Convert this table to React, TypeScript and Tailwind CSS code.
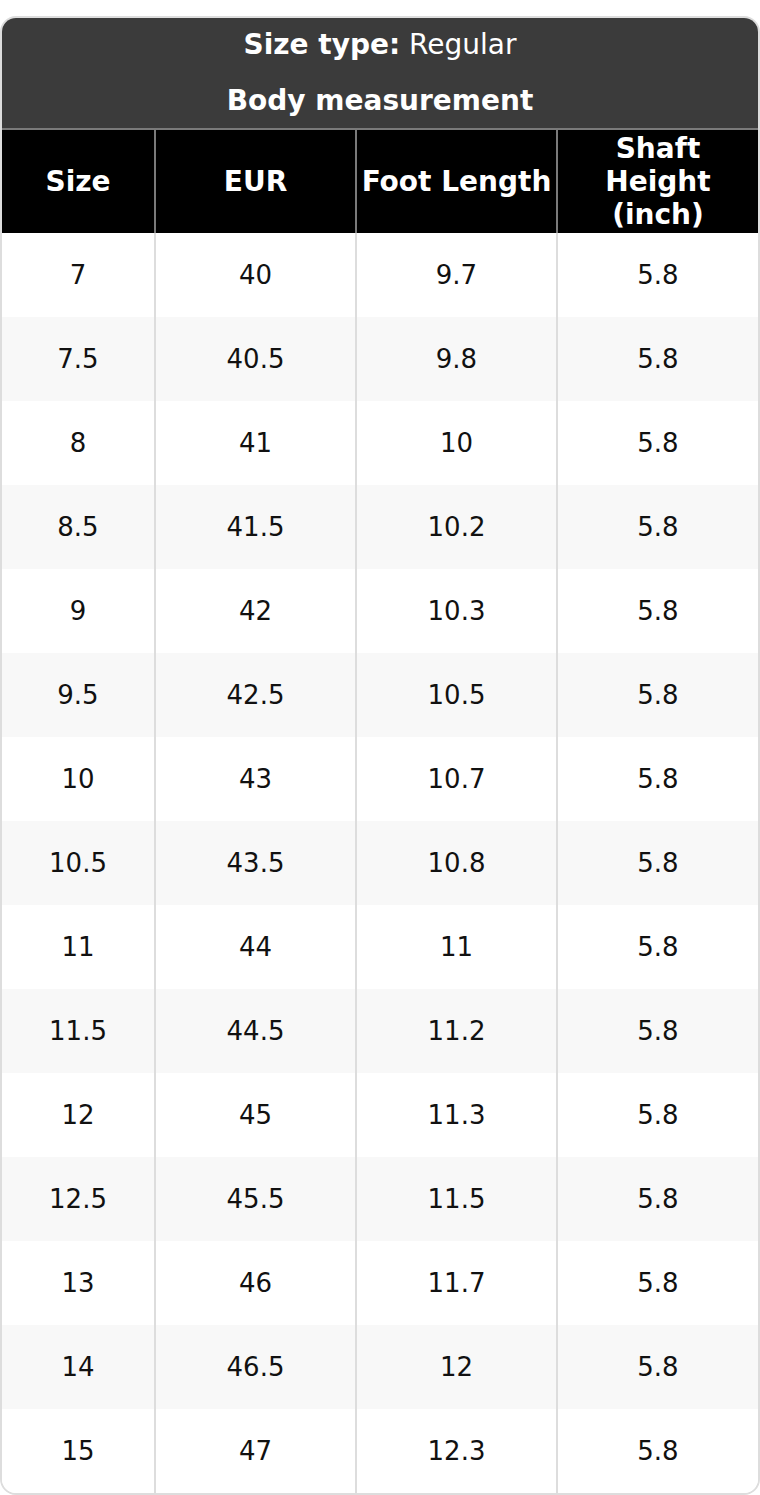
import React from "react";

const rows: [string, string, string, string][] = [
  ["7", "40", "9.7", "5.8"],
  ["7.5", "40.5", "9.8", "5.8"],
  ["8", "41", "10", "5.8"],
  ["8.5", "41.5", "10.2", "5.8"],
  ["9", "42", "10.3", "5.8"],
  ["9.5", "42.5", "10.5", "5.8"],
  ["10", "43", "10.7", "5.8"],
  ["10.5", "43.5", "10.8", "5.8"],
  ["11", "44", "11", "5.8"],
  ["11.5", "44.5", "11.2", "5.8"],
  ["12", "45", "11.3", "5.8"],
  ["12.5", "45.5", "11.5", "5.8"],
  ["13", "46", "11.7", "5.8"],
  ["14", "46.5", "12", "5.8"],
  ["15", "47", "12.3", "5.8"],
];

export default function App() {
  return (
    <div
      className="w-[760px] bg-white pt-[16px]"
      style={{ fontFamily: '"DejaVu Sans", Verdana, sans-serif' }}
    >
      <div className="border-2 border-[#dddddd] rounded-[16px] overflow-hidden">
        <div className="bg-[#3b3b3b] text-white text-[28px] leading-[33px]">
          <div className="h-[56px] -mt-[2px] flex items-center justify-center">
            <span className="font-bold">Size type:</span>
            <span>&nbsp;Regular</span>
          </div>
          <div className="h-[56px] flex items-center justify-center font-bold">
            Body measurement
          </div>
        </div>
        <div className="grid grid-cols-[152px_201px_201px_1fr] bg-black text-white text-[28px] leading-[33px] font-bold border-t-2 border-[#7a7a7a]">
          <div className="h-[103px] flex items-center justify-center text-center">Size</div>
          <div className="h-[103px] flex items-center justify-center text-center border-l-2 border-[#7a7a7a]">EUR</div>
          <div className="h-[103px] flex items-center justify-center text-center border-l-2 border-[#7a7a7a] whitespace-nowrap">Foot Length</div>
          <div className="h-[103px] flex items-center justify-center text-center border-l-2 border-[#7a7a7a]">
            Shaft
            <br />
            Height
            <br />
            (inch)
          </div>
        </div>
        {rows.map((r, i) => (
          <div
            key={i}
            className={`grid grid-cols-[152px_201px_201px_1fr] text-[26px] text-[#111111] ${
              i % 2 === 1 ? "bg-[#f8f8f8]" : "bg-white"
            }`}
          >
            <div className="h-[84px] flex items-center justify-center">{r[0]}</div>
            <div className="h-[84px] flex items-center justify-center border-l-2 border-[#dddddd]">{r[1]}</div>
            <div className="h-[84px] flex items-center justify-center border-l-2 border-[#dddddd]">{r[2]}</div>
            <div className="h-[84px] flex items-center justify-center border-l-2 border-[#dddddd]">{r[3]}</div>
          </div>
        ))}
      </div>
    </div>
  );
}
